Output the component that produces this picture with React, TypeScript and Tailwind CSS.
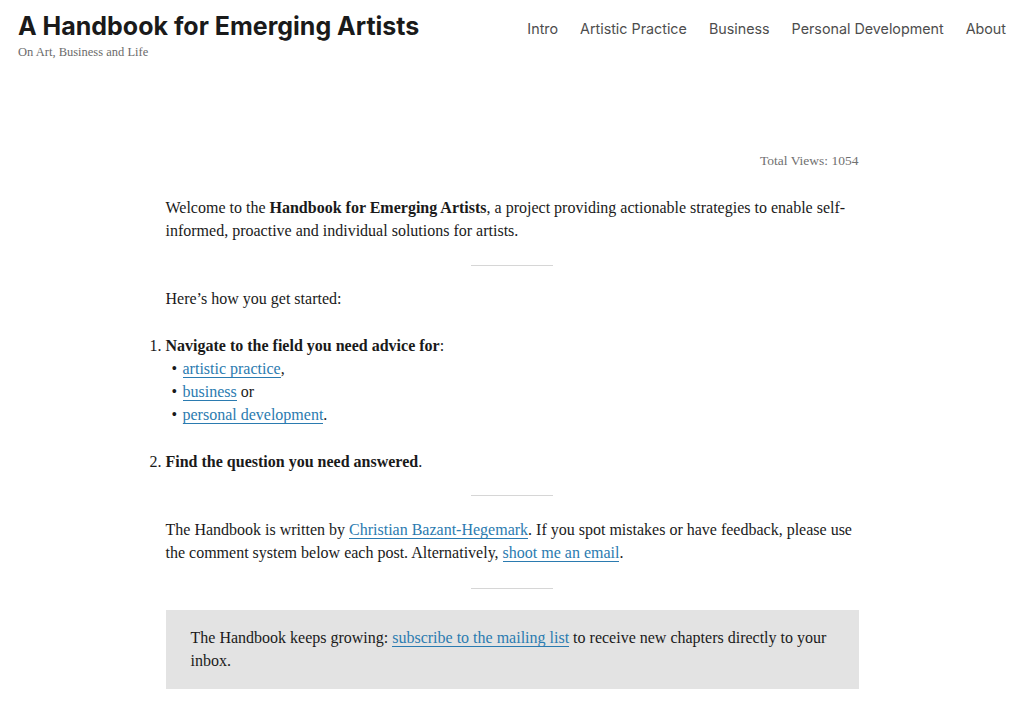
const serif = { fontFamily: '"Liberation Serif", "DejaVu Serif", serif' };

function Separator({ className = "mt-[23px] mb-[21px]" }: { className?: string }) {
  return <hr className={`mx-auto w-[82px] border-0 border-t border-[#d6d6d6] ${className}`} />;
}

function A({ children }: { children: React.ReactNode }) {
  return (
    <a href="#" className="text-[#2b7bb0] border-b border-[#2b7bb0]">
      {children}
    </a>
  );
}

function Bullet({ children }: { children: React.ReactNode }) {
  return (
    <li className="relative pl-[17px] before:absolute before:left-[6px] before:content-['•']">
      {children}
    </li>
  );
}

export default function App() {
  const nav = ["Intro", "Artistic Practice", "Business", "Personal Development", "About"];
  return (
    <div className="min-h-[710px] bg-white text-[#1a1a1a]">
      <header className="flex items-start justify-between px-[18px] pt-[12px]">
        <div>
          <h1
            className="text-[25px] font-bold leading-[28px] text-[#1a1a1a]"
            style={{ fontFamily: "Inter, sans-serif" }}
          >
            A Handbook for Emerging Artists
          </h1>
          <p className="mt-[3px] text-[12.5px] text-[#6b6b6b]" style={serif}>
            On Art, Business and Life
          </p>
        </div>
        <nav
          className="flex gap-[22px] pt-[6px] text-[14.3px] text-[#4d4d4d]"
          style={{ fontFamily: "Inter, sans-serif" }}
        >
          {nav.map((n) => (
            <a key={n} href="#">
              {n}
            </a>
          ))}
        </nav>
      </header>

      <main className="mx-auto mt-[87px] w-[693px] text-[16px] leading-[23px]" style={serif}>
        <p className="text-right text-[13.5px] text-[#707070]">Total Views: 1054</p>

        <p className="mt-[24px]">
          Welcome to the <strong>Handbook for Emerging Artists</strong>, a project providing actionable
          strategies to enable self-informed, proactive and individual solutions for artists.
        </p>

        <Separator />

        <p>Here’s how you get started:</p>

        <ol className="mt-[24px] list-decimal list-outside">
          <li>
            <strong>Navigate to the field you need advice for</strong>:
            <ul>
              <Bullet>
                <A>artistic practice</A>,
              </Bullet>
              <Bullet>
                <A>business</A> or
              </Bullet>
              <Bullet>
                <A>personal development</A>.
              </Bullet>
            </ul>
          </li>
          <li className="mt-[24px]">
            <strong>Find the question you need answered</strong>.
          </li>
        </ol>

        <Separator className="mt-[22px] mb-[22px]" />

        <p>
          The Handbook is written by <A>Christian Bazant-Hegemark</A>. If you spot mistakes or have
          feedback, please use the comment system below each post. Alternatively, <A>shoot me an email</A>.
        </p>

        <Separator className="mt-[24px] mb-[21px]" />

        <div className="bg-[#e3e3e3] px-[25px] pt-[16px] pb-[17px]">
          <p>
            The Handbook keeps growing: <A>subscribe to the mailing list</A> to receive new chapters
            directly to your inbox.
          </p>
        </div>
      </main>
    </div>
  );
}
